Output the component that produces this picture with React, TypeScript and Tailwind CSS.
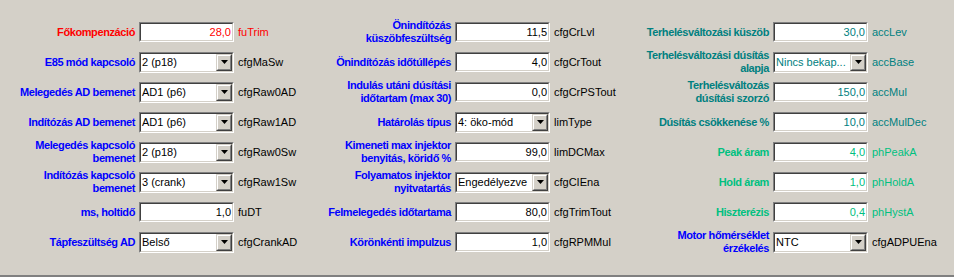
import React from "react";

type Row = {
  label: string[];
  lc: string;
  kind: "input" | "select";
  value: string;
  vc: string;
  name: string;
  nc: string;
};

const RED = "text-[#ff0000]";
const BLUE = "text-[#0000ff]";
const TEAL = "text-[#008080]";
const GREEN = "text-[#00c080]";
const BLACK = "text-black";

const col1: Row[] = [
  { label: ["Főkompenzáció"], lc: RED, kind: "input", value: "28,0", vc: RED, name: "fuTrim", nc: RED },
  { label: ["E85 mód kapcsoló"], lc: BLUE, kind: "select", value: "2 (p18)", vc: BLACK, name: "cfgMaSw", nc: BLACK },
  { label: ["Melegedés AD bemenet"], lc: BLUE, kind: "select", value: "AD1 (p6)", vc: BLACK, name: "cfgRaw0AD", nc: BLACK },
  { label: ["Indítózás AD bemenet"], lc: BLUE, kind: "select", value: "AD1 (p6)", vc: BLACK, name: "cfgRaw1AD", nc: BLACK },
  { label: ["Melegedés kapcsoló", "bemenet"], lc: BLUE, kind: "select", value: "2 (p18)", vc: BLACK, name: "cfgRaw0Sw", nc: BLACK },
  { label: ["Indítózás kapcsoló", "bemenet"], lc: BLUE, kind: "select", value: "3 (crank)", vc: BLACK, name: "cfgRaw1Sw", nc: BLACK },
  { label: ["ms, holtidő"], lc: BLUE, kind: "input", value: "1,0", vc: BLACK, name: "fuDT", nc: BLACK },
  { label: ["Tápfeszültség AD"], lc: BLUE, kind: "select", value: "Belső", vc: BLACK, name: "cfgCrankAD", nc: BLACK },
];

const col2: Row[] = [
  { label: ["Önindítózás", "küszöbfeszültség"], lc: BLUE, kind: "input", value: "11,5", vc: BLACK, name: "cfgCrLvl", nc: BLACK },
  { label: ["Önindítózás időtúllépés"], lc: BLUE, kind: "input", value: "4,0", vc: BLACK, name: "cfgCrTout", nc: BLACK },
  { label: ["Indulás utáni dúsítási", "időtartam (max 30)"], lc: BLUE, kind: "input", value: "0,0", vc: BLACK, name: "cfgCrPSTout", nc: BLACK },
  { label: ["Határolás típus"], lc: BLUE, kind: "select", value: "4: öko-mód", vc: BLACK, name: "limType", nc: BLACK },
  { label: ["Kimeneti max injektor", "benyitás, köridő %"], lc: BLUE, kind: "input", value: "99,0", vc: BLACK, name: "limDCMax", nc: BLACK },
  { label: ["Folyamatos injektor", "nyitvatartás"], lc: BLUE, kind: "select", value: "Engedélyezve", vc: BLACK, name: "cfgCIEna", nc: BLACK },
  { label: ["Felmelegedés időtartama"], lc: BLUE, kind: "input", value: "80,0", vc: BLACK, name: "cfgTrimTout", nc: BLACK },
  { label: ["Körönkénti impulzus"], lc: BLUE, kind: "input", value: "1,0", vc: BLACK, name: "cfgRPMMul", nc: BLACK },
];

const col3: Row[] = [
  { label: ["Terhelésváltozási küszöb"], lc: TEAL, kind: "input", value: "30,0", vc: TEAL, name: "accLev", nc: TEAL },
  { label: ["Terhelésváltozási dúsítás", "alapja"], lc: TEAL, kind: "select", value: "Nincs bekap...", vc: TEAL, name: "accBase", nc: TEAL },
  { label: ["Terhelésváltozás", "dúsítási szorzó"], lc: TEAL, kind: "input", value: "150,0", vc: TEAL, name: "accMul", nc: TEAL },
  { label: ["Dúsítás csökkenése %"], lc: TEAL, kind: "input", value: "10,0", vc: TEAL, name: "accMulDec", nc: TEAL },
  { label: ["Peak áram"], lc: GREEN, kind: "input", value: "4,0", vc: GREEN, name: "phPeakA", nc: GREEN },
  { label: ["Hold áram"], lc: GREEN, kind: "input", value: "1,0", vc: GREEN, name: "phHoldA", nc: GREEN },
  { label: ["Hiszterézis"], lc: GREEN, kind: "input", value: "0,4", vc: GREEN, name: "phHystA", nc: GREEN },
  { label: ["Motor hőmérséklet", "érzékelés"], lc: BLUE, kind: "select", value: "NTC", vc: BLACK, name: "cfgADPUEna", nc: BLACK },
];

const sunken =
  "border border-t-[#808080] border-l-[#808080] border-b-white border-r-white";
const sunkenInner =
  "border border-t-[#404040] border-l-[#404040] border-b-[#d4d0c8] border-r-[#d4d0c8]";

function Field({ row }: { row: Row }) {
  if (row.kind === "input") {
    return (
      <div className={`h-[20px] w-[95px] ${sunken}`}>
        <div className={`h-full w-full bg-white ${sunkenInner} flex items-center justify-end pr-[1px]`}>
          <span className={`text-[11px] leading-none ${row.vc}`}>{row.value}</span>
        </div>
      </div>
    );
  }
  return (
    <div className={`h-[21px] w-[95px] ${sunken}`}>
      <div className={`h-full w-full bg-white ${sunkenInner} flex items-stretch`}>
        <div className="flex flex-1 items-center overflow-hidden pl-[1px]">
          <span className={`whitespace-nowrap text-[11px] leading-none ${row.vc}`}>{row.value}</span>
        </div>
        <div className="w-[16px] border border-t-[#d4d0c8] border-l-[#d4d0c8] border-b-[#404040] border-r-[#404040]">
          <div className="flex h-full w-full items-center justify-center border border-t-white border-l-white border-b-[#808080] border-r-[#808080] bg-[#d4d0c8]">
            <svg width="7" height="4" viewBox="0 0 7 4">
              <polygon points="0,0 7,0 3.5,4" fill="#000" />
            </svg>
          </div>
        </div>
      </div>
    </div>
  );
}

function Column({ rows }: { rows: Row[] }) {
  return (
    <div className="grid grid-cols-[135px_95px_1fr] auto-rows-[30px] gap-x-[4px]">
      {rows.map((r, i) => (
        <React.Fragment key={i}>
          <div
            className={`flex flex-col items-end justify-center text-right text-[11px] font-bold leading-[13px] tracking-[-0.4px] ${r.lc}`}
          >
            {r.label.map((l, j) => (
              <span key={j} className="whitespace-nowrap">
                {l}
              </span>
            ))}
          </div>
          <div className="flex items-center">
            <Field row={r} />
          </div>
          <div className={`flex items-center whitespace-nowrap text-[11px] ${r.nc}`}>{r.name}</div>
        </React.Fragment>
      ))}
    </div>
  );
}

export default function App() {
  return (
    <div
      className="h-[277px] w-[954px] overflow-hidden border-b-2 border-b-[#808080] bg-[#d4d0c8] pt-[17px]"
      style={{ fontFamily: '"Liberation Sans", Arial, sans-serif' }}
    >
      <div className="grid grid-cols-[316px_318px_1fr]">
        <Column rows={col1} />
        <Column rows={col2} />
        <Column rows={col3} />
      </div>
    </div>
  );
}
